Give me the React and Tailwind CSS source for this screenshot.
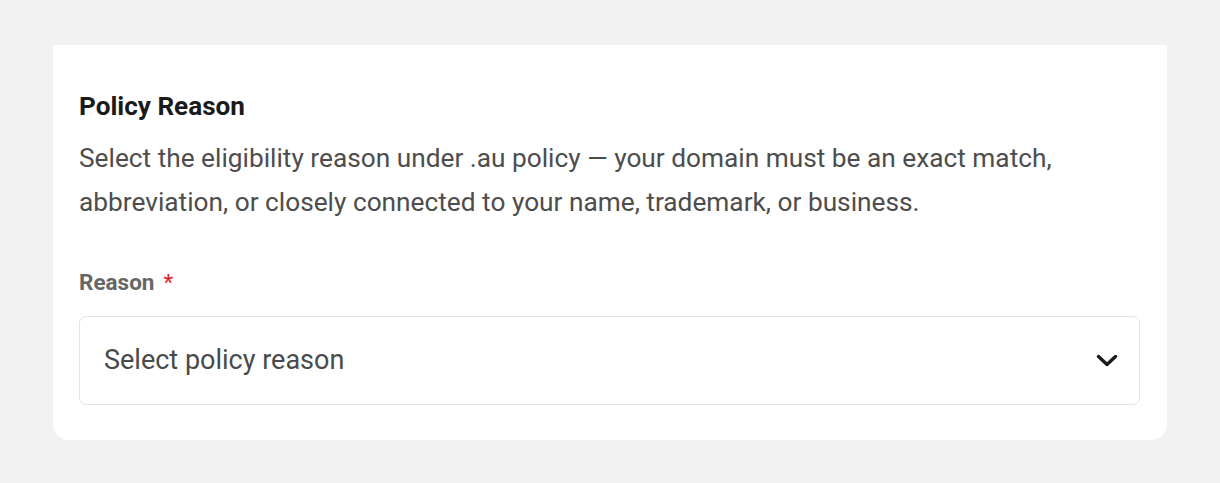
export default function App() {
  return (
    <div className="min-h-[483px] w-[1220px] bg-[#f2f2f2] pt-[45px] pl-[53px]" style={{ fontFamily: "Roboto, 'Liberation Sans', sans-serif" }}>
      <div className="w-[1114px] h-[395px] bg-white rounded-b-[16px] pl-[26px] pr-[27px] pt-[46px]">
        <h2 className="text-[26.1px] leading-[30px] font-bold text-[#1a1a1a]">Policy Reason</h2>
        <p className="mt-[15px] text-[26.25px] leading-[44px] text-[#4d4d4d]">
          Select the eligibility reason under .au policy — your domain must be an exact match, abbreviation, or closely connected to your name, trademark, or business.
        </p>
        <div className="mt-[44px] flex items-center text-[22.5px] leading-[28px] font-bold text-[#666]">
          Reason <span className="ml-[9px] font-normal text-[#e02424]">*</span>
        </div>
        <div className="mt-[20px] h-[89px] border border-[#e5e5e5] rounded-[7px] flex items-center justify-between pl-[24px] pr-[20px]">
          <span className="text-[27px] text-[#4a4a4a]">Select policy reason</span>
          <svg width="24" height="24" viewBox="0 0 24 24" fill="none" stroke="#1a1a1a" strokeWidth="3.4" strokeLinecap="round" strokeLinejoin="round">
            <path d="M3.5 7.5l8.5 8 8.5-8" />
          </svg>
        </div>
      </div>
    </div>
  );
}
